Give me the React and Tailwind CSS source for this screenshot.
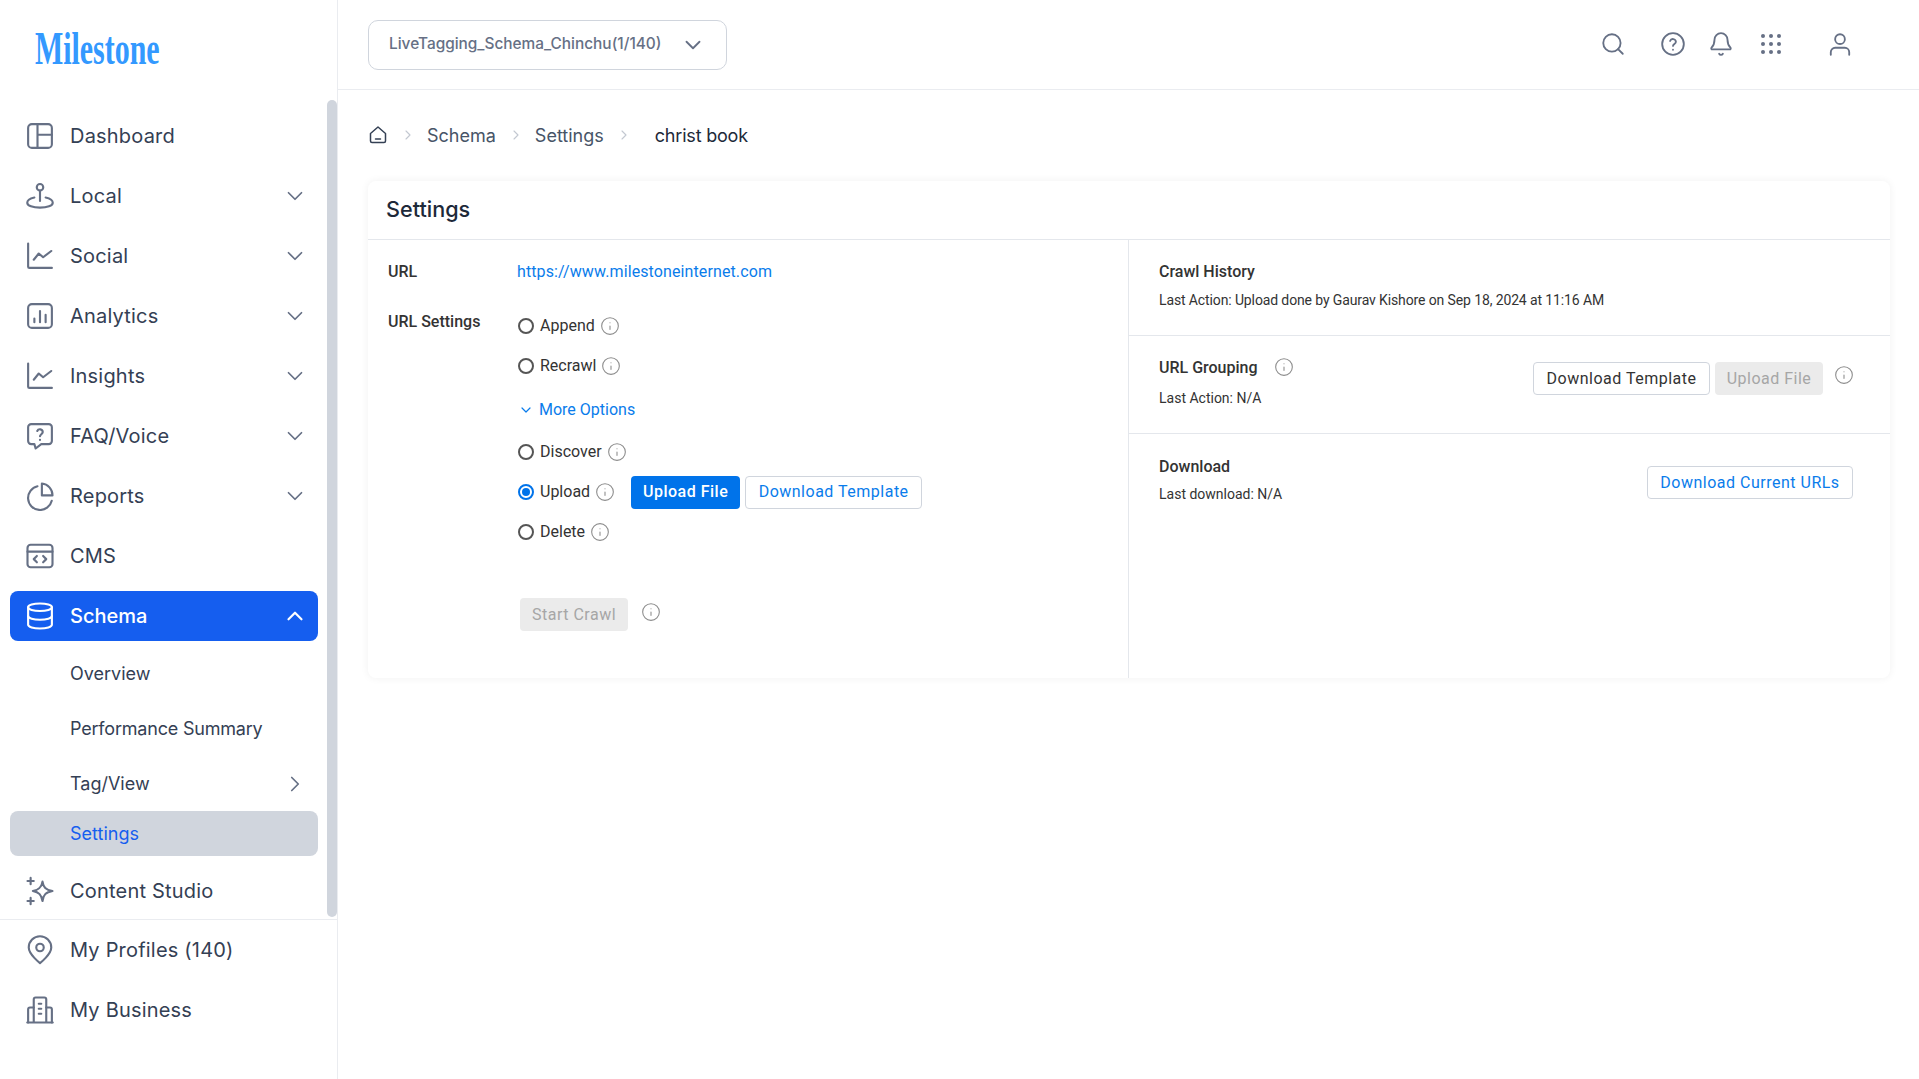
import { ChevronDown, ChevronUp, ChevronRight, Search, Bell, Info } from 'lucide-react';

function Svg({ children }) {
  return (
    <svg viewBox="0 0 24 24" fill="none" stroke="currentColor" strokeWidth="1.7" strokeLinecap="round" strokeLinejoin="round" className="w-[30px] h-[30px] shrink-0">
      {children}
    </svg>
  );
}

const icons = {
  dashboard: (
    <>
      <rect x="2.5" y="2.5" width="19" height="19" rx="3" />
      <path d="M10 2.5v19M10 11h11.5" />
    </>
  ),
  local: (
    <>
      <circle cx="12" cy="5" r="2.6" />
      <path d="M12 7.6V16" />
      <path d="M7.5 13.2C4 14 1.8 15.3 1.8 17.3c0 2.4 4.5 4 10.2 4s10.2-1.6 10.2-4c0-2-2.2-3.3-5.7-4.1" />
    </>
  ),
  chart: (
    <>
      <path d="M2.5 2v18.5a1 1 0 0 0 1 1h18" />
      <path d="M7 15l4-5 3.5 3L21 8" />
    </>
  ),
  analytics: (
    <>
      <rect x="2.5" y="2.5" width="19" height="19" rx="3" />
      <path d="M7.5 17v-3M12 17V8M16.5 17v-6" />
    </>
  ),
  faq: (
    <>
      <path d="M5 2.5h14a2.5 2.5 0 0 1 2.5 2.5v11a2.5 2.5 0 0 1-2.5 2.5h-6l-4.5 3.5-1-3.5H5A2.5 2.5 0 0 1 2.5 16V5A2.5 2.5 0 0 1 5 2.5z" />
      <path d="M9.8 8a2.3 2.3 0 0 1 4.4.8c0 1.6-2.2 1.9-2.2 3.4M12 15v.1" />
    </>
  ),
  reports: (
    <>
      <path d="M10 4.2a9.6 9.6 0 1 0 11.4 11.6" />
      <path d="M13.5 2v9.5H22A9.5 9.5 0 0 0 13.5 2z" />
    </>
  ),
  cms: (
    <>
      <rect x="2" y="3" width="20" height="18" rx="2.5" />
      <path d="M2 8.5h20M9.5 12l-2.5 2.5 2.5 2.5M14.5 12l2.5 2.5-2.5 2.5" />
    </>
  ),
  schema: (
    <>
      <ellipse cx="12" cy="5" rx="9.5" ry="3" />
      <path d="M2.5 5v14c0 1.7 4.3 3 9.5 3s9.5-1.3 9.5-3V5" />
      <path d="M2.5 12c0 1.7 4.3 3 9.5 3s9.5-1.3 9.5-3" />
    </>
  ),
  studio: (
    <>
      <path d="M14 4.5c.7 4.5 2.5 6.5 8 7.5-5.5 1-7.3 3-8 8-.9-5-2.7-7-7.7-8 5-1 6.9-3 7.7-7.5z" />
      <path d="M4.5 1.5v5M2 4h5M4.5 17.5v5M2 20h5" />
    </>
  ),
  pin: (
    <>
      <path d="M12 22.5S3 15.5 3 10a9 9 0 0 1 18 0c0 5.5-9 12.5-9 12.5z" />
      <circle cx="12" cy="10" r="3" />
    </>
  ),
  business: (
    <>
      <path d="M1.8 22h20.4M7 22V3.5A1.5 1.5 0 0 1 8.5 2h7A1.5 1.5 0 0 1 17 3.5V22" />
      <path d="M7 10H4a1.5 1.5 0 0 0-1.5 1.5V22M17 10h3a1.5 1.5 0 0 1 1.5 1.5V22M11 7h2M11 11h2M11 15h2" />
    </>
  ),
};

const topItems = [
  ['Dashboard', 'dashboard', false],
  ['Local', 'local', true],
  ['Social', 'chart', true],
  ['Analytics', 'analytics', true],
  ['Insights', 'chart', true],
  ['FAQ/Voice', 'faq', true],
  ['Reports', 'reports', true],
  ['CMS', 'cms', false],
];

function NavItem({ label, icon, chevron }) {
  return (
    <div className="flex items-center h-[50px] mx-[10px] pl-4 pr-[10px] text-[#344054]">
      <span className="flex justify-center w-7 text-[#667085]"><Svg>{icons[icon]}</Svg></span>
      <span className="ml-[16px] flex-1 text-[20px] tracking-[0.2px]">{label}</span>
      {chevron && <ChevronDown className="w-[26px] h-[26px] text-[#667085]" strokeWidth={1.6} />}
    </div>
  );
}

function SubItem({ label, children, className = '' }) {
  return (
    <div className={`flex items-center h-[45px] mx-[10px] pl-[60px] pr-[10px] rounded-lg text-[18px] ${className}`}>
      <span className="flex-1">{label}</span>
      {children}
    </div>
  );
}

function Sidebar() {
  return (
    <aside className="relative w-[338px] shrink-0 h-[1079px] border-r border-[#eaecf0] bg-white">
      <div className="absolute right-0 top-[100px] w-[10px] h-[817px] rounded-full bg-[#d0d5dd]"></div>
      <div className="w-[328px]">
        <div className="h-[111px] pl-[35px] pt-[22px]">
          <div className="text-[46px] leading-[54px] font-bold text-[#3399ff] origin-left scale-x-[0.65] font-['Liberation_Serif',serif] whitespace-nowrap">
            Milestone
          </div>
        </div>
        <nav className="flex flex-col gap-[10px]">
          {topItems.map(([label, icon, chevron]) => (
            <NavItem key={label} label={label} icon={icon} chevron={chevron} />
          ))}
          <div className="flex items-center h-[50px] mx-[10px] pl-4 pr-[10px] rounded-lg bg-[#155eef] text-white">
            <span className="flex justify-center w-7"><Svg>{icons.schema}</Svg></span>
            <span className="ml-[16px] flex-1 text-[20px] font-medium">Schema</span>
            <ChevronUp className="w-[26px] h-[26px]" strokeWidth={2} />
          </div>
        </nav>
        <div className="mt-[10px] flex flex-col gap-[10px] text-[#344054]">
          <SubItem label="Overview" />
          <SubItem label={<span className="tracking-[-0.2px]">Performance Summary</span>} />
          <SubItem label="Tag/View">
            <ChevronRight className="w-[26px] h-[26px] text-[#667085]" strokeWidth={1.6} />
          </SubItem>
        </div>
        <SubItem label="Settings" className="mt-[5px] bg-[#d0d5dd] text-[#155eef]" />
      </div>
      <div className="mt-[10px] pb-[3px] border-b border-[#eaecf0]">
        <NavItem label="Content Studio" icon="studio" />
      </div>
      <div className="mt-[5px] flex flex-col gap-[10px]">
        <NavItem label="My Profiles (140)" icon="pin" />
        <NavItem label="My Business" icon="business" />
      </div>
    </aside>
  );
}

function TopBar() {
  return (
    <header className="flex items-center h-[90px] border-b border-[#eaecf0] pl-[30px] text-[#667085]">
      <div className="flex items-center w-[359px] h-[50px] border border-[#d0d5dd] rounded-[10px] pl-[20px] pr-[20px]">
        <span className="flex-1 text-[15.4px] font-medium pb-[1px] whitespace-nowrap">LiveTagging_Schema_Chinchu(1/140)</span>
        <ChevronDown className="w-[26px] h-[26px]" strokeWidth={1.7} />
      </div>
      <div className="flex items-center ml-auto mr-[66px] pb-[2px]">
        <Search className="w-[26px] h-[26px]" strokeWidth={1.7} />
        <svg viewBox="0 0 24 24" fill="none" stroke="currentColor" strokeWidth="1.7" strokeLinecap="round" className="ml-[34px] w-[26px] h-[26px]">
          <circle cx="12" cy="12" r="10" />
          <path d="M9.3 9.2a2.8 2.8 0 0 1 5.4.8c0 1.8-2.7 2.2-2.7 3.8M12 17.3v.1" />
        </svg>
        <Bell className="ml-[22px] w-[26px] h-[26px]" strokeWidth={1.7} />
        <svg viewBox="0 0 20 20" fill="currentColor" className="ml-[27px] w-[20px] h-[20px]">
          {[2, 10, 18].map((y) => [2, 10, 18].map((x) => <circle key={`${x}-${y}`} cx={x} cy={y} r="2" />))}
        </svg>
        <svg viewBox="0 0 24 24" fill="none" stroke="currentColor" strokeWidth="1.7" strokeLinecap="round" className="ml-[46px] w-[26px] h-[26px]">
          <circle cx="12" cy="7.5" r="4.5" />
          <path d="M3.5 22v-2.5a4 4 0 0 1 4-4h9a4 4 0 0 1 4 4V22" />
        </svg>
      </div>
    </header>
  );
}

function Crumbs() {
  return (
    <div className="flex items-center h-[46px] mt-[22px] text-[18px] text-[#475467]">
      <svg viewBox="0 0 20 20" fill="none" stroke="#344054" strokeWidth="1.5" strokeLinecap="round" strokeLinejoin="round" className="w-[20px] h-[20px]">
        <path d="M2.5 8.5L10 2l7.5 6.5V16a1.5 1.5 0 0 1-1.5 1.5H4A1.5 1.5 0 0 1 2.5 16zM7.5 14h5" />
      </svg>
      <ChevronRight className="ml-[12px] mr-[11px] w-[16px] h-[16px] text-[#c3c8d1]" strokeWidth={1.7} />
      <span>Schema</span>
      <ChevronRight className="ml-[12px] mr-[11px] w-[16px] h-[16px] text-[#c3c8d1]" strokeWidth={1.7} />
      <span>Settings</span>
      <ChevronRight className="ml-[12px] mr-[23px] w-[16px] h-[16px] text-[#c3c8d1]" strokeWidth={1.7} />
      <span className="text-[#1d2939] tracking-[-0.2px]">christ book</span>
    </div>
  );
}

function Tip({ className = '' }) {
  return <Info className={`w-[20px] h-[20px] text-[#8c8c8c] ${className}`} strokeWidth={1.3} />;
}

function Radio({ label, checked, children }) {
  return (
    <div className="flex items-center h-[40px] text-[16px] text-[#333333]">
      <span className={`flex items-center justify-center w-[16px] h-[16px] rounded-full border-2 ${checked ? 'border-[#0073ea]' : 'border-[#555555]'}`}>
        {checked && <span className="w-[8px] h-[8px] rounded-full bg-[#0073ea]"></span>}
      </span>
      <span className="ml-[6px]">{label}</span>
      <Tip className="ml-[5px] -mt-[1px]" />
      {children}
    </div>
  );
}

function Btn({ children, className = '' }) {
  return (
    <button className={`flex items-center justify-center h-[33px] rounded text-[16px] tracking-[0.5px] ${className}`}>
      {children}
    </button>
  );
}

function LeftPanel() {
  return (
    <div className="w-[761px] border-r border-[#e4e7ec] pl-[20px] pt-[20px] pb-[47px] font-['Roboto',sans-serif]">
      <div className="flex items-center h-[24px] text-[16px]">
        <span className="w-[129px] font-medium text-[#333333]">URL</span>
        <a className="text-[#0a7ceb] tracking-[0.11px]">https://www.milestoneinternet.com</a>
      </div>
      <div className="flex mt-[22px]">
        <div className="w-[130px] mt-[4px] text-[16px] font-medium text-[#333333]">URL Settings</div>
        <div className="flex-1">
          <Radio label="Append" />
          <Radio label="Recrawl" />
          <div className="flex items-center h-[40px] mt-[4px] text-[16px] text-[#0a7ceb]">
            <ChevronDown className="w-[16px] h-[16px]" strokeWidth={1.8} />
            <span className="ml-[5px]">More Options</span>
          </div>
          <div className="mt-[2px]">
            <Radio label="Discover" />
            <Radio label="Upload" checked>
              <Btn className="ml-[16px] w-[109px] bg-[#0073ea] text-white font-medium">Upload File</Btn>
              <Btn className="ml-[5px] w-[177px] border border-[#d0d5dd] text-[#0a7ceb]">Download Template</Btn>
            </Radio>
            <Radio label="Delete" />
          </div>
          <div className="flex items-center mt-[46px] ml-[2px]">
            <Btn className="w-[108px] bg-[#ebebeb] text-[#a6a6a6]">Start Crawl</Btn>
            <Tip className="ml-[13px] -mt-[6px]" />
          </div>
        </div>
      </div>
    </div>
  );
}

function RightPanel() {
  return (
    <div className="flex-1 font-['Roboto',sans-serif] text-[#333333]">
      <div className="h-[96px] border-b border-[#e4e7ec] pl-[30px] pt-[20px]">
        <div className="text-[16px] font-medium leading-[24px]">Crawl History</div>
        <div className="mt-[6px] text-[14px] leading-[20px] tracking-[-0.12px]">Last Action: Upload done by Gaurav Kishore on Sep 18, 2024 at 11:16 AM</div>
      </div>
      <div className="flex h-[98px] border-b border-[#e4e7ec] pl-[30px] pr-[36px] pt-[20px]">
        <div className="flex-1">
          <div className="flex items-center h-[24px] text-[16px] font-medium">
            URL Grouping
            <Tip className="ml-[16px] -mt-[3px]" />
          </div>
          <div className="mt-[8px] text-[14px] leading-[20px]">Last Action: N/A</div>
        </div>
        <div className="flex items-start mt-[6px]">
          <Btn className="w-[177px] border border-[#d0d5dd] text-[#333333]">Download Template</Btn>
          <Btn className="ml-[5px] w-[108px] bg-[#ebebeb] text-[#a6a6a6]">Upload File</Btn>
          <Tip className="ml-[11px] mt-[3px]" />
        </div>
      </div>
      <div className="flex pl-[30px] pr-[37px] pt-[21px]">
        <div className="flex-1">
          <div className="text-[16px] font-medium leading-[24px]">Download</div>
          <div className="mt-[5px] text-[14px] leading-[20px]">Last download: N/A</div>
        </div>
        <Btn className="mt-[11px] w-[206px] border border-[#d0d5dd] text-[#0a7ceb]">Download Current URLs</Btn>
      </div>
    </div>
  );
}

export default function App() {
  return (
    <div className="flex w-[1919px] h-[1079px] overflow-hidden bg-white font-['Inter',sans-serif]">
      <Sidebar />
      <main className="flex-1">
        <TopBar />
        <div className="pl-[30px] pr-[29px]">
          <Crumbs />
          <section className="mt-[23px] rounded-lg bg-white shadow-[0_0_8px_rgba(16,24,40,0.06)]">
            <div className="flex items-center h-[59px] border-b border-[#e4e7ec] pl-[18px] pb-[2px] text-[21.6px] font-medium text-[#1d2939]">
              Settings
            </div>
            <div className="flex">
              <LeftPanel />
              <RightPanel />
            </div>
          </section>
        </div>
      </main>
    </div>
  );
}
